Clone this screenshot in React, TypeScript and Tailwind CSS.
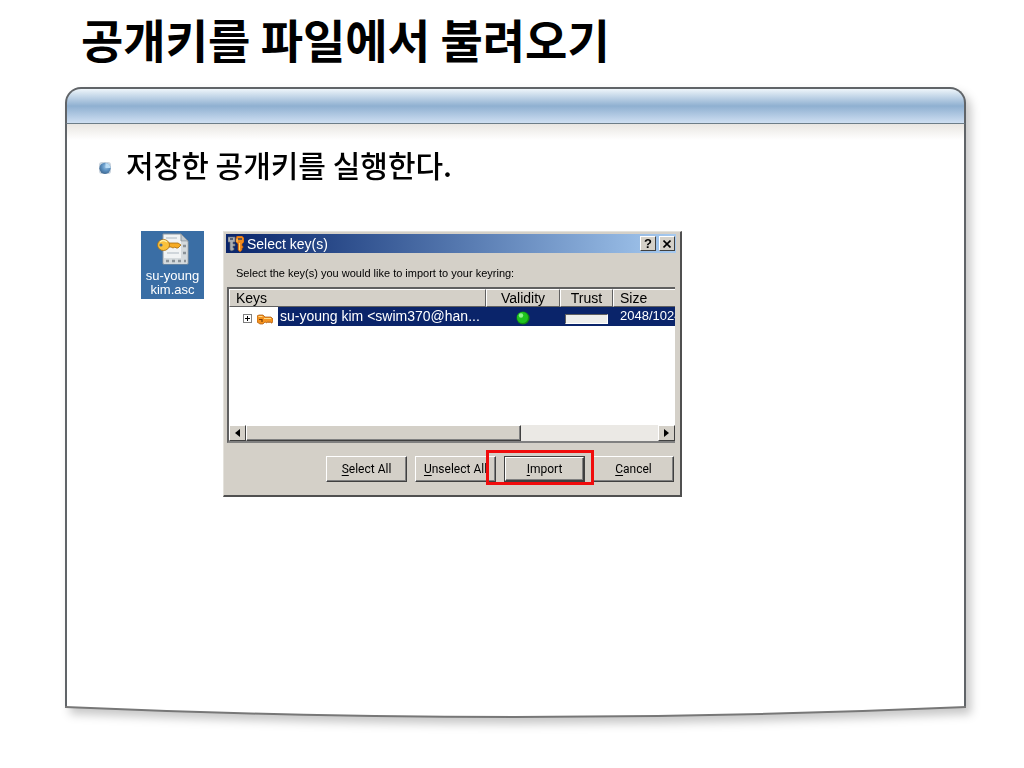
import React from "react";

const cjk = "font-['Noto_Sans_CJK_KR',sans-serif]";
const face = "border border-t-white border-l-white border-r-[#404040] border-b-[#404040] bg-[#d4d0c8]";

const Bullet: React.FC = () => (
  <svg className="mt-2 h-3 w-3 shrink-0" viewBox="0 0 12 12" aria-hidden="true">
    <defs>
      <radialGradient id="bullet" cx="0.6" cy="0.35" r="0.7">
        <stop offset="0" stopColor="#9cc4e6" />
        <stop offset="0.5" stopColor="#5d92c2" />
        <stop offset="1" stopColor="#3d668f" />
      </radialGradient>
    </defs>
    <rect width="12" height="12" rx="3" fill="#c9d3dd" />
    <circle cx="6" cy="6.3" r="5.6" fill="url(#bullet)" />
    <path d="M6.5 6V1A5.2 5.2 0 0 1 11.5 6Z" fill="#b9dcf5" />
  </svg>
);

const KeyFileIcon: React.FC = () => (
  <svg className="h-8 w-8" viewBox="0 0 32 32" aria-hidden="true">
    <path d="M6 1H24L31 8V31H6Z" fill="#f1f3f4" stroke="#8d979f" />
    <path d="M24 1V8H31Z" fill="#c3cbd1" stroke="#8d979f" />
    <path d="M9 5H20M10 20H22" stroke="#cfd5da" strokeWidth="2" />
    <path d="M24 9H30V31H24Z" fill="#d5dadd" />
    <path d="M7 25H30V31H7Z" fill="#d5dadd" />
    <path d="M9 28H12M15 28H18M21 28H24M26 13H29M26 20H29M27 28H29" stroke="#8b9298" strokeWidth="2.5" />
    <path d="M10 10H21L24 12L21 15H19L18 14L16 15L14 14H10Z" fill="#f6ab24" stroke="#a46b10" strokeWidth="0.8" />
    <ellipse cx="6.5" cy="12" rx="6" ry="5.5" fill="#fac13b" stroke="#a46b10" strokeWidth="0.8" />
    <path d="M3 9Q6 6 10 9" stroke="#fff0a8" strokeWidth="1.5" fill="none" />
    <circle cx="4" cy="12" r="1.6" fill="#4a6d94" />
  </svg>
);

const TitleKeysIcon: React.FC = () => (
  <svg className="h-4 w-4 shrink-0" viewBox="0 0 16 16" aria-hidden="true">
    <path d="M0 1H7V6H5V8H7V10H5V12H6V14H5L4 15L2 14V6H0Z" fill="#a9adb4" stroke="#62666d" strokeWidth="0.6" />
    <path d="M9 0H14L16 2V6L14 8V10H15V12H14V14L12 16L10 14V8L8 6V2Z" fill="#f28a1d" stroke="#b65308" strokeWidth="0.6" />
    <path d="M11.5 7V14M9 3V6" stroke="#ffd36a" />
    <path d="M10 3H14M2 3H5" stroke="#33435f" strokeWidth="1.4" />
  </svg>
);

const RowKeyIcon: React.FC = () => (
  <svg className="h-3 w-4" viewBox="0 0 16 12" aria-hidden="true">
    <path d="M0 3L2 2H6L8 4H14L16 6V8L15 10H14L13 8.5L12 10L11 8.5L10 10L8 9L6 11H3L0 9Z" fill="#f49320" stroke="#a65308" strokeWidth="0.7" />
    <path d="M1.5 3.5H5.5M7 5.5H14" stroke="#ffdc86" strokeWidth="1.2" />
    <path d="M2 6.5H5V9" stroke="#7a3c05" strokeWidth="1.2" fill="none" />
  </svg>
);

const ValidityDot: React.FC = () => (
  <svg className="mx-auto mt-0.5 h-[14px] w-[14px]" viewBox="0 0 14 14" role="img" aria-label="Valid">
    <circle cx="7" cy="7" r="6.5" fill="#128a12" />
    <circle cx="6.5" cy="6.5" r="5.5" fill="#1fc41f" />
    <circle cx="5" cy="4.5" r="2.2" fill="#8cf58c" />
  </svg>
);

const Arrow: React.FC<{ left?: boolean }> = ({ left }) => (
  <svg className="h-2 w-[5px]" viewBox="0 0 5 8" aria-hidden="true">
    <path d={left ? "M5 0V8L0 4Z" : "M0 0V8L5 4Z"} fill="#000" />
  </svg>
);

const TitleButton: React.FC<{ label: string; children: React.ReactNode }> = ({ label, children }) => (
  <button type="button" aria-label={label} className={`${face} flex h-[15px] w-4 items-center justify-center`}>
    {children}
  </button>
);

const DialogButton: React.FC<{ text: string; primary?: boolean }> = ({ text, primary }) => (
  <div className="relative">
    <button
      type="button"
      className={`${primary ? "border border-[#404040]" : ""} block h-[26px] w-[81px] text-[12px]`}
    >
      <span
        className={`${face} flex h-full items-center justify-center whitespace-nowrap font-['Roboto',sans-serif] shadow-[inset_-1px_-1px_0_#808080]`}
      >
        <span className="underline underline-offset-2">{text[0]}</span>
        {text.slice(1)}
      </span>
    </button>
    {primary && (
      <div className="pointer-events-none absolute -top-1.5 -right-[9px] -bottom-[3px] -left-[18px] z-10 border-3 border-[#f00c0c]" />
    )}
  </div>
);

const th = "border-t border-l border-r border-b border-t-white border-l-white border-r-[#606060] border-b-[#606060] p-0 font-normal";

const KeyTable: React.FC = () => (
  <div className="overflow-hidden">
    <table className="w-full table-fixed border-separate border-spacing-0 text-[14px] leading-4">
      <colgroup>
        <col />
        <col className="w-[74px]" />
        <col className="w-[53px]" />
        <col className="w-[62px]" />
      </colgroup>
      <thead>
        <tr className="h-[18px] bg-[#d4d0c8]">
          <th className={`${th} pl-1.5 text-left`}>Keys</th>
          <th className={th}>Validity</th>
          <th className={th}>Trust</th>
          <th className={`${th} border-r-0 pl-1.5 text-left`}>Size</th>
        </tr>
      </thead>
      <tbody>
        <tr className="h-[19px] text-white">
          <td className="p-0">
            <div className="flex items-center pl-3.5">
              <button
                type="button"
                aria-label="Expand key"
                className="mt-1 flex h-[9px] w-[9px] items-center justify-center border border-[#808080] bg-white"
              >
                <svg className="h-[5px] w-[5px]" viewBox="0 0 5 5" aria-hidden="true">
                  <path d="M0 2.5H5M2.5 0V5" stroke="#000" />
                </svg>
              </button>
              <div className="mx-[5px] mt-1">
                <RowKeyIcon />
              </div>
              <div className="h-[19px] flex-1 overflow-hidden bg-[#0a246a] pl-0.5 leading-[18px] whitespace-nowrap">
                su-young kim &lt;swim370@han...
              </div>
            </div>
          </td>
          <td className="bg-[#0a246a] p-0">
            <ValidityDot />
          </td>
          <td className="bg-[#0a246a] p-0">
            <div className="mx-auto mt-1 h-2.5 w-[43px] border border-t-[#606060] border-r-white border-b-white border-l-[#606060] bg-[#eeeeec]" />
          </td>
          <td className="overflow-hidden bg-[#0a246a] p-0 pl-[7px] align-top text-[13px] leading-[18px] whitespace-nowrap">
            2048/1024
          </td>
        </tr>
      </tbody>
    </table>
  </div>
);

const Scrollbar: React.FC = () => (
  <div className="flex h-4 bg-[#ebe9e5]">
    <button type="button" aria-label="Scroll left" className={`${face} flex w-[17px] items-center justify-center`}>
      <Arrow left />
    </button>
    <div className="flex flex-1">
      <div className={`${face} w-2/3 shadow-[inset_-1px_-1px_0_#808080]`} />
    </div>
    <button type="button" aria-label="Scroll right" className={`${face} flex w-[17px] items-center justify-center`}>
      <Arrow />
    </button>
  </div>
);

const SelectKeysDialog: React.FC = () => (
  <section
    aria-label="Select key(s)"
    className="w-[459px] border border-t-[#e4e2dc] border-r-2 border-r-[#505050] border-b-2 border-b-[#505050] border-l-[#e4e2dc] bg-[#d4d0c8] p-0.5 pr-1 pb-3 text-black"
  >
    <div className="flex h-[19px] items-center bg-linear-to-r from-[#0a246a] to-[#a6caf0] pr-px pl-0.5 text-[14px] text-white">
      <TitleKeysIcon />
      <h2 className="flex-1 pl-[3px] leading-4">Select key(s)</h2>
      <div className="flex gap-[3px] text-black">
        <TitleButton label="Help">
          <span className="text-[13px] leading-3 font-bold">?</span>
        </TitleButton>
        <TitleButton label="Close">
          <svg className="h-2 w-2" viewBox="0 0 8 8" aria-hidden="true">
            <path d="M0.5 0.5L7.5 7.5M7.5 0.5L0.5 7.5" stroke="#000" strokeWidth="1.6" />
          </svg>
        </TitleButton>
      </div>
    </div>
    <p className="mt-3 pl-2.5 text-[11px] leading-4">
      Select the key(s) you would like to import to your keyring:
    </p>
    <div className="mt-1.5 mr-px ml-px flex h-[156px] flex-col border-t-2 border-b-2 border-l-2 border-t-[#606060] border-b-[#808080] border-l-[#606060] bg-white">
      <KeyTable />
      <div className="flex-1" />
      <Scrollbar />
    </div>
    <div className="mt-[13px] flex justify-end gap-2 pr-0.5 pb-px">
      <DialogButton text="Select All" />
      <DialogButton text="Unselect All" />
      <DialogButton text="Import" primary />
      <DialogButton text="Cancel" />
    </div>
  </section>
);

const App: React.FC = () => {
  return (
    <main className="flex min-h-screen flex-col bg-white pr-[58px] pb-[50px] pl-[65px] font-['Liberation_Sans',sans-serif] text-black">
      <h1 className={`${cjk} flex h-[87px] items-center pb-3 pl-4 text-[46px] leading-none font-bold`}>
        공개키를 파일에서 불려오기
      </h1>
      <div className="flex flex-1 flex-col drop-shadow-[5px_6px_5px_rgba(0,0,0,0.22)]">
        <div className="h-[37px] rounded-t-2xl border-2 border-b border-[#606468] border-b-[#6d7d88] bg-linear-to-b from-[#eef5fa] via-[#8fb0d1] to-[#cfdff2]" />
        <div className="flex-1 border-x-2 border-[#606468] bg-white">
          <div className="h-4 bg-linear-to-b from-[#e9e6e2] to-white" />
          <ul className={`${cjk} pt-0.5 pl-8`}>
            <li className="flex items-center gap-[15px]">
              <Bullet />
              <span className="text-[30px] leading-11 font-medium">저장한 공개키를 실행한다.</span>
            </li>
          </ul>
          <div className="mt-[45px] flex items-start gap-[19px] pl-[74px]">
            <figure className="flex h-[68px] w-[63px] flex-col items-center bg-[#3a6ea5] pt-0.5 text-center text-[13px] leading-[14px] text-white">
              <KeyFileIcon />
              <figcaption className="mt-1 whitespace-nowrap">
                su-young
                <br />
                kim.asc
              </figcaption>
            </figure>
            <SelectKeysDialog />
          </div>
        </div>
        <svg
          className="block h-[11px] w-full overflow-visible"
          viewBox="0 0 900 11"
          preserveAspectRatio="none"
          aria-hidden="true"
        >
          <path d="M0 0Q450 20 900 0Z" fill="#fff" />
          <path d="M0 0Q450 20 900 0" fill="none" stroke="#777" strokeWidth="2" />
        </svg>
      </div>
    </main>
  );
};

export default App;
